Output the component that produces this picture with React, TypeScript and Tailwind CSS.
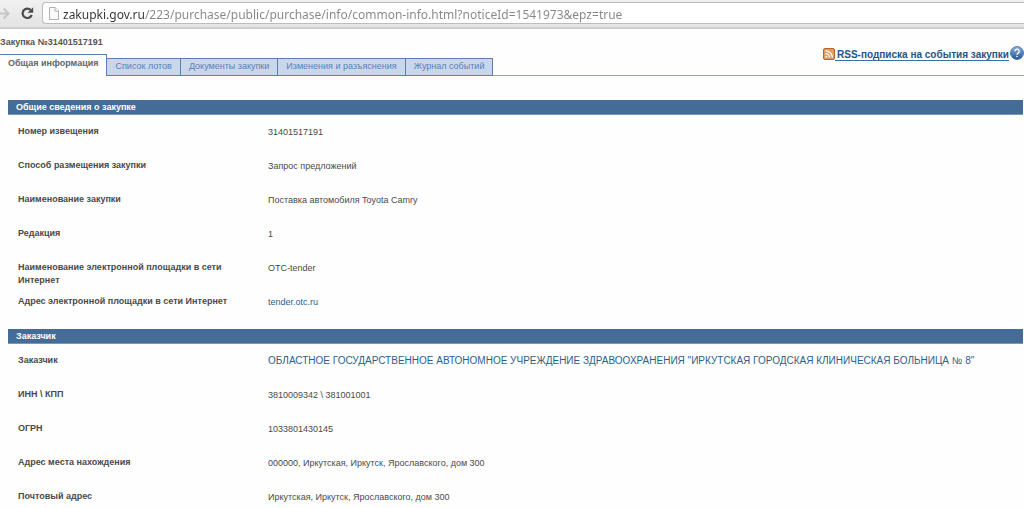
import React from "react";

type Row = { label: string; value: string; href?: string; large?: boolean };

const noticeRows: Row[] = [
  { label: "Номер извещения", value: "31401517191" },
  { label: "Способ размещения закупки", value: "Запрос предложений" },
  { label: "Наименование закупки", value: "Поставка автомобиля Toyota Camry" },
  { label: "Редакция", value: "1" },
  { label: "Наименование электронной площадки в сети Интернет", value: "OTC-tender" },
  { label: "Адрес электронной площадки в сети Интернет", value: "tender.otc.ru", href: "#tender" },
];

const customerRows: Row[] = [
  {
    label: "Заказчик",
    value:
      'ОБЛАСТНОЕ ГОСУДАРСТВЕННОЕ АВТОНОМНОЕ УЧРЕЖДЕНИЕ ЗДРАВООХРАНЕНИЯ "ИРКУТСКАЯ ГОРОДСКАЯ КЛИНИЧЕСКАЯ БОЛЬНИЦА № 8"',
    href: "#customer",
    large: true,
  },
  { label: "ИНН \\ КПП", value: "3810009342 \\ 381001001" },
  { label: "ОГРН", value: "1033801430145" },
  { label: "Адрес места нахождения", value: "000000, Иркутская, Иркутск, Ярославского, дом 300" },
  { label: "Почтовый адрес", value: "Иркутская, Иркутск, Ярославского, дом 300" },
];

const tabs = ["Список лотов", "Документы закупки", "Изменения и разъяснения", "Журнал событий"];

function BrowserBar() {
  return (
    <header className="flex h-[29px] items-start border-b-2 border-[#cfcfcf] bg-linear-to-b from-[#f1f1f1] to-[#e3e3e3]">
      <button type="button" aria-label="Вперёд" className="mt-1 h-5 w-[10px] shrink-0">
        <svg viewBox="0 0 10 20" className="h-5 w-[10px]" fill="none" stroke="#c6c6c6" strokeWidth="2">
          <path d="M0 9.5h8M3.5 4.5l5 5-5 5" />
        </svg>
      </button>
      <button type="button" aria-label="Обновить" className="mt-1 ml-[10px] h-5 w-[14px] shrink-0">
        <svg viewBox="0 0 14 20" className="h-5 w-[14px]">
          <path d="M10.6 5.9A4.7 4.7 0 1 0 11.7 11" fill="none" stroke="#4c4c4c" strokeWidth="2.2" />
          <path d="M13.2 3.2v5.6H7.6z" fill="#4c4c4c" />
        </svg>
      </button>
      <div className="mt-[2px] ml-2 flex h-[22px] min-w-0 flex-1 items-center rounded-l-sm border border-r-0 border-[#bcbcc0] bg-white pl-[6px]">
        <svg viewBox="0 0 10 13" className="h-[13px] w-[10px] shrink-0" fill="#fafafa" stroke="#b0b0b0">
          <path d="M.5.5h5.6l3.4 3.4v8.6h-9z" />
          <path d="M6 .5v3.6h3.5" />
        </svg>
        <input
          type="text"
          aria-label="Адрес страницы"
          spellCheck={false}
          defaultValue="zakupki.gov.ru/223/purchase/public/purchase/info/common-info.html?noticeId=1541973&epz=true"
          className="ml-1 h-5 min-w-0 flex-1 bg-[linear-gradient(90deg,#333_82px,#858585_82px)] bg-clip-text pt-[2px] font-['Noto_Sans','Open_Sans',sans-serif] text-[12px] leading-[18px] text-transparent outline-none"
        />
      </div>
    </header>
  );
}

function RssIcon() {
  return (
    <svg viewBox="0 0 12 12" className="h-3 w-3 shrink-0">
      <rect x=".5" y=".5" width="11" height="11" rx="1.5" fill="#e29a5c" stroke="#b9652a" />
      <g fill="none" stroke="#fff" strokeWidth="1.3">
        <path d="M2.5 5.6a4 4 0 0 1 4 4M2.5 2.8a6.8 6.8 0 0 1 6.8 6.8" />
      </g>
      <circle cx="3.4" cy="8.8" r="1" fill="#fff" />
    </svg>
  );
}

function HelpIcon() {
  return (
    <svg viewBox="0 0 14 14" className="h-[14px] w-[14px]">
      <defs>
        <linearGradient id="help" x1="0" y1="0" x2="0" y2="1">
          <stop offset="0" stopColor="#8fb2da" />
          <stop offset="1" stopColor="#1f5596" />
        </linearGradient>
      </defs>
      <circle cx="7" cy="7" r="6.5" fill="url(#help)" stroke="#3c6ca6" strokeWidth=".8" />
      <path d="M4.9 5.4a2.1 2.1 0 1 1 3.2 1.7c-.8.5-1.1.8-1.1 1.6" fill="none" stroke="#fff" strokeWidth="1.3" />
      <circle cx="7" cy="10.5" r=".8" fill="#fff" />
    </svg>
  );
}

function Section({ title, rows }: { title: string; rows: Row[] }) {
  return (
    <section>
      <h2 className="h-[15px] border-b border-[#7c96b6] bg-[#456b97] pl-2 text-[9px] leading-[14px] font-bold text-white">
        {title}
      </h2>
      <dl className="pt-[10px]">
        {rows.map((row) => (
          <div key={row.label} className="flex min-h-[34px] pl-[10px] leading-[13px]">
            <dt className="w-[250px] shrink-0 pr-8 text-[9px] font-bold text-[#4a4a4a]">{row.label}</dt>
            <dd className={row.large ? "text-[10px]" : "pt-px text-[9px]"}>
              {row.href ? (
                <a href={row.href} className="text-[#2c5f8a]">
                  {row.value}
                </a>
              ) : (
                <span className="text-[#4a4a4a]">{row.value}</span>
              )}
            </dd>
          </div>
        ))}
      </dl>
    </section>
  );
}

export default function App() {
  return (
    <div className="min-h-screen overflow-hidden bg-[#fefefe] font-['Liberation_Sans',Arial,sans-serif]">
      <BrowserBar />
      <main>
        <div className="flex items-end justify-between border-b border-[#8fa6c0]">
          <div>
            <h1 className="mb-[5px] pt-[7px] text-[9px] leading-[13px] font-bold text-[#555]">
              Закупка №31401517191
            </h1>
            <nav className="-mb-px flex items-end text-[9px]">
              <a
                href="#general"
                aria-current="page"
                className="h-[22px] border-t border-r border-[#5b80ae] bg-[#fefefe] px-2 leading-[17px] font-bold text-[#666]"
              >
                Общая информация
              </a>
              {tabs.map((tab) => (
                <a
                  key={tab}
                  href="#tab"
                  className="h-[18px] border-t border-r border-b border-[#5b80ae] bg-[#c9d7ea] px-2 leading-[14px] text-[#5a80bb]"
                >
                  {tab}
                </a>
              ))}
            </nav>
          </div>
          <div className="mb-[14px] flex items-start">
            <a href="#rss" className="flex items-start pt-[2px] text-[10px] font-bold text-[#1f5685]">
              <RssIcon />
              <span className="border-b border-[#3f7099] pt-[2px] pl-[2px] leading-[10px]">
                RSS-подписка на события закупки
              </span>
            </a>
            <button type="button" aria-label="Справка" className="ml-px">
              <HelpIcon />
            </button>
          </div>
        </div>
        <div className="mt-6 mr-px ml-2">
          <Section title="Общие сведения о закупке" rows={noticeRows} />
          <Section title="Заказчик" rows={customerRows} />
        </div>
      </main>
    </div>
  );
}
